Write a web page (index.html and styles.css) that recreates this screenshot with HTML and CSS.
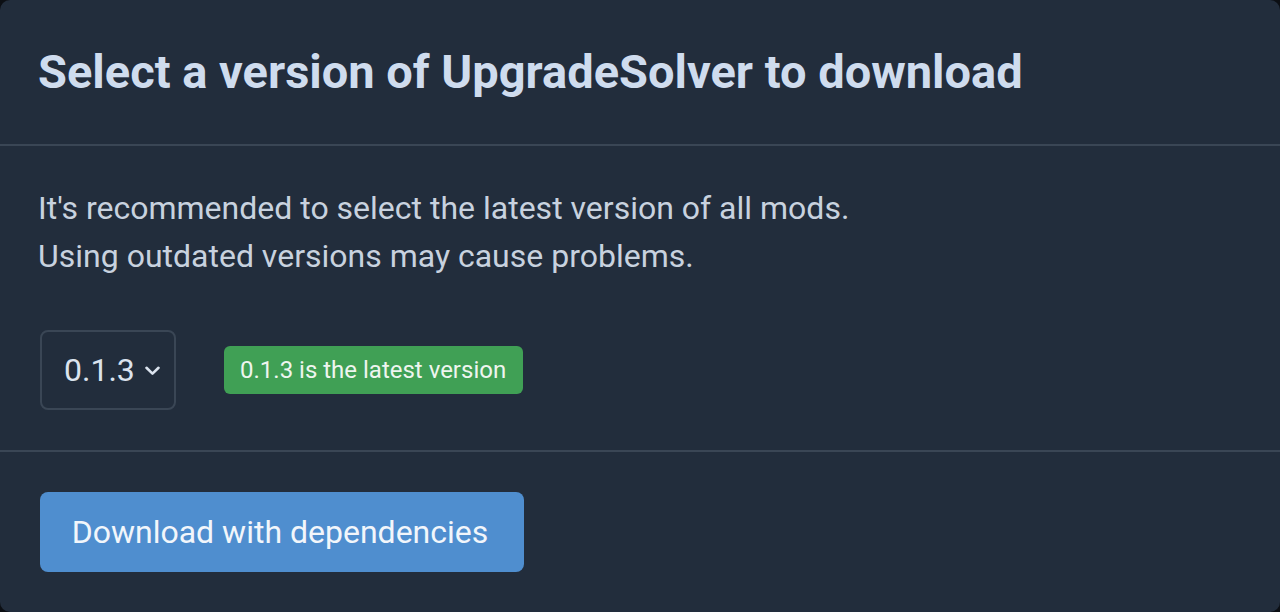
FILE: index.html
```html
<!DOCTYPE html>
<html lang="en">
<head>
<meta charset="utf-8">
<title>Select version</title>
<link rel="stylesheet" href="styles.css">
</head>
<body>
<div class="modal">
  <div class="modal-header">
    <h2 class="modal-title">Select a version of UpgradeSolver to download</h2>
  </div>
  <div class="modal-body">
    <p class="note">It's recommended to select the latest version of all mods.<br>Using outdated versions may cause problems.</p>
    <div class="version-row">
      <div class="select">
        <span class="select-value">0.1.3</span>
        <svg class="chevron" width="15" height="10" viewBox="0 0 15 10"><path d="M1.5 1.8 L7.5 7.6 L13.5 1.8" fill="none" stroke="#dbe3ee" stroke-width="2.6" stroke-linecap="round" stroke-linejoin="round"/></svg>
      </div>
      <span class="badge">0.1.3 is the latest version</span>
    </div>
  </div>
  <div class="modal-footer">
    <button class="btn-primary">Download with dependencies</button>
  </div>
</div>
</body>
</html>
```
FILE: styles.css
```css
html, body {
  margin: 0;
  padding: 0;
  background: #0c0f14;
}
body {
  font-family: Roboto, "Liberation Sans", sans-serif;
}
.modal {
  height: 612px;
  box-sizing: border-box;
  background: #222d3c;
  border-radius: 10px;
  display: flex;
  flex-direction: column;
  overflow: hidden;
}
.modal-header {
  height: 146px;
  box-sizing: border-box;
  padding: 0 38px;
  display: flex;
  align-items: center;
  border-bottom: 2px solid #3a4655;
}
.modal-title {
  margin: 0;
  font-size: 47px;
  font-weight: 700;
  color: #cfdcee;
  line-height: 1.2;
}
.modal-body {
  height: 306px;
  box-sizing: border-box;
  padding: 38px 38px 0;
  border-bottom: 2px solid #3a4655;
}
.note {
  margin: 0;
  font-size: 32px;
  line-height: 48px;
  color: #c8d2df;
}
.version-row {
  margin-top: 50px;
  display: flex;
  align-items: center;
  gap: 48px;
  padding-left: 2px;
}
.select {
  width: 136px;
  height: 80px;
  box-sizing: border-box;
  border: 2px solid #3a4655;
  border-radius: 8px;
  display: flex;
  align-items: center;
  padding-left: 22px;
  gap: 10px;
}
.select-value {
  font-size: 32px;
  color: #dbe3ee;
}
.chevron {
  display: block;
  margin-top: 2px;
  flex: none;
}
.badge {
  height: 48px;
  box-sizing: border-box;
  padding: 0 17px 0 16px;
  display: inline-flex;
  align-items: center;
  background: #40a055;
  color: #eef5ef;
  border-radius: 6px;
  font-size: 24px;
  font-weight: 400;
}
.modal-footer {
  flex: 1;
  padding: 40px 40px 0;
}
.btn-primary {
  height: 80px;
  width: 484px;
  border: none;
  border-radius: 8px;
  background: #4f8ecf;
  color: #f2f6fb;
  font-family: Roboto, "Liberation Sans", sans-serif;
  font-size: 32px;
  padding: 0 4px 0 0;
  cursor: pointer;
}
```
